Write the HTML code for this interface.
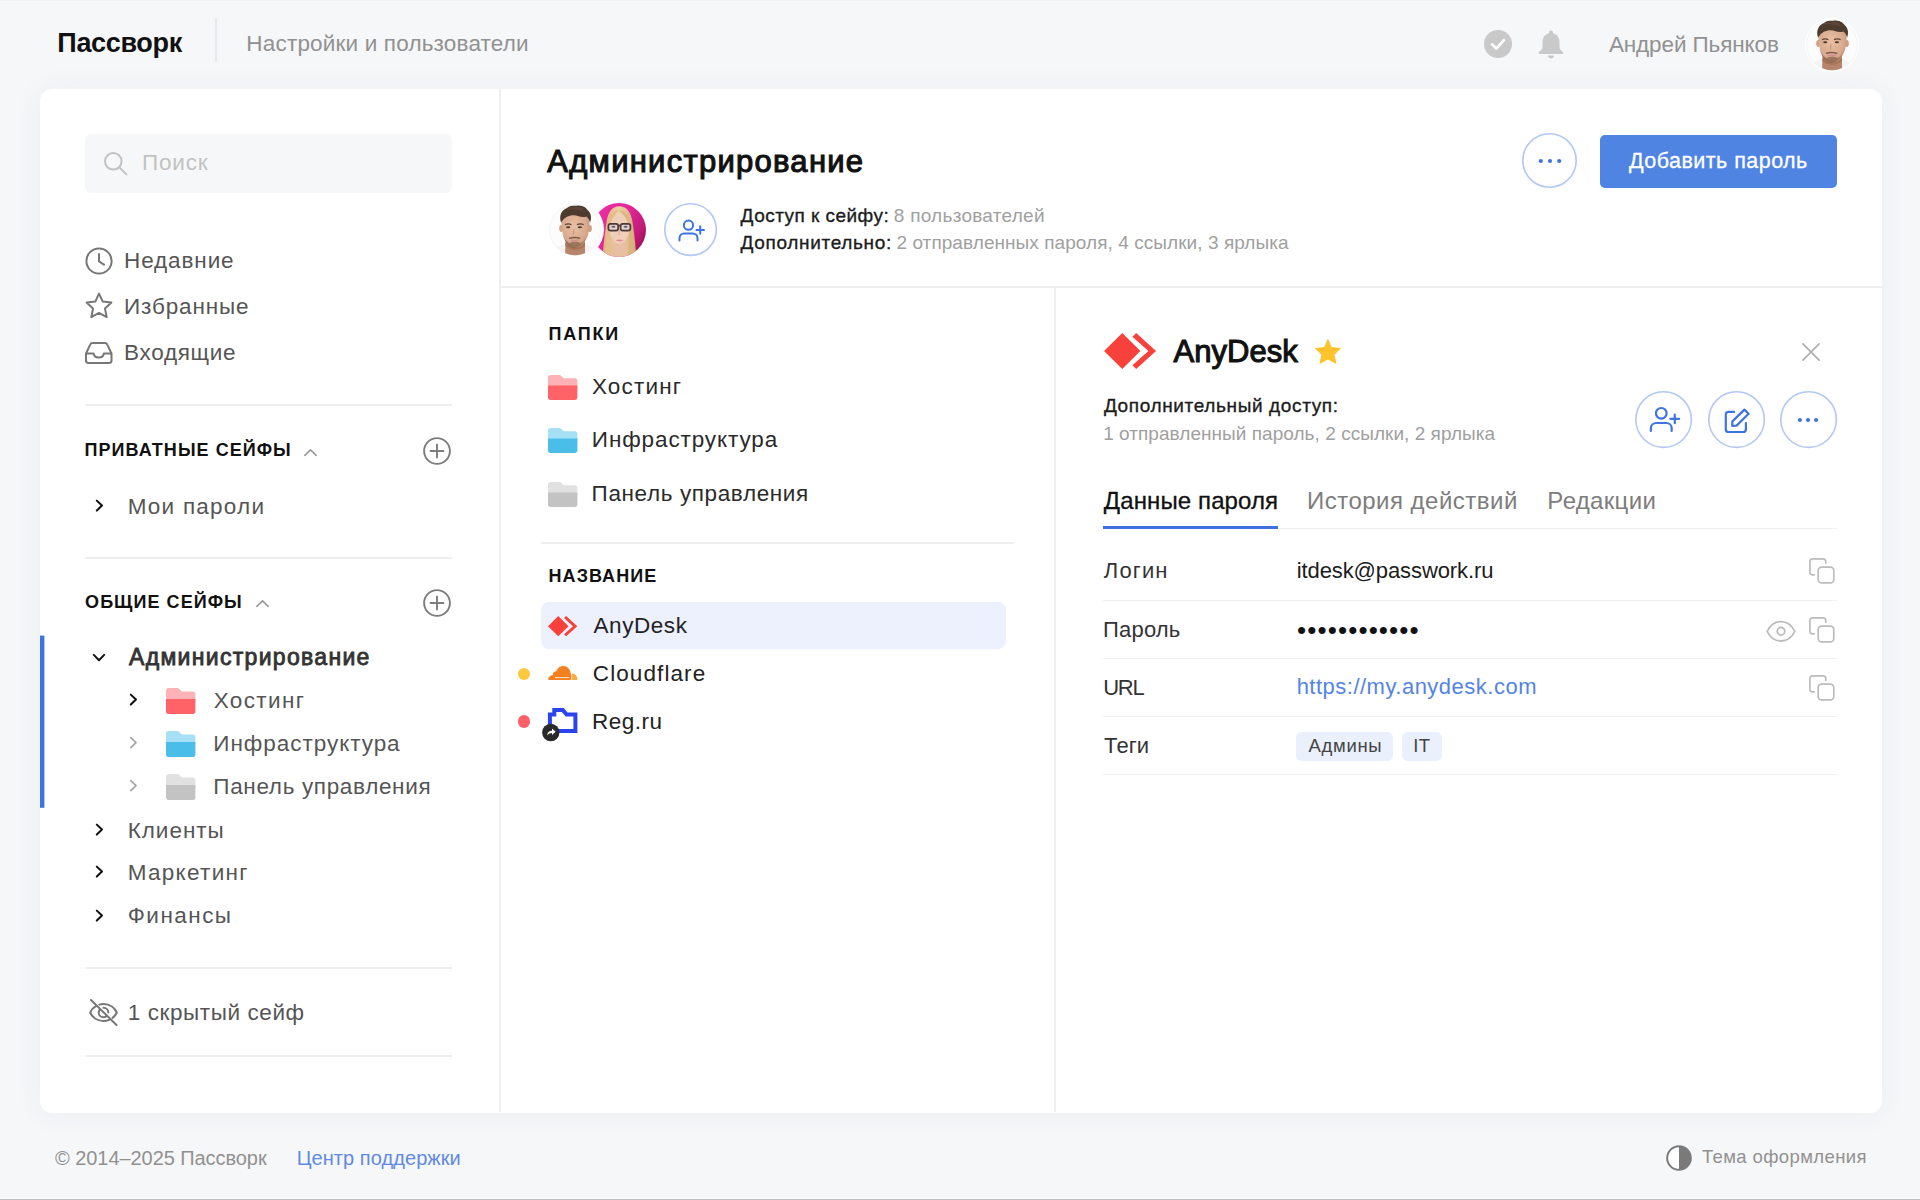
<!DOCTYPE html>
<html lang="ru">
<head>
<meta charset="utf-8">
<title>Пассворк</title>
<style>
*{box-sizing:border-box;margin:0;padding:0}
html,body{width:1920px;height:1200px;overflow:hidden}
body{background:#f6f7f9;font-family:"Liberation Sans","DejaVu Sans",sans-serif;color:#1a1a1a;position:relative}
.a{position:absolute}
.t{position:absolute;white-space:nowrap;line-height:1}
.b{font-weight:700}
svg{position:absolute;overflow:visible}
.card{position:absolute;left:40px;top:89px;width:1842px;height:1024px;background:#fff;border-radius:12px;box-shadow:0 1px 30px rgba(40,50,80,.05)}
.cb{position:absolute;border-radius:50%;border:2px solid #c5d6f8;background:#fff}
.m{-webkit-text-stroke:.35px currentColor}
.m2{-webkit-text-stroke:.3px currentColor}
.sb{-webkit-text-stroke:1.1px currentColor}
.sb2{-webkit-text-stroke:.85px currentColor}
</style>
</head>
<body>
<!-- TOP BAR -->
<div class="t b" id="logo" style="left:57.36px;top:30px;font-size:27px;letter-spacing:-0.344px;color:#111;">Пассворк</div>
<div class="a" style="left:215px;top:18px;width:2px;height:44px;background:#e8e9ec"></div>
<div class="a" style="left:0px;top:0px;width:1920px;height:1px;background:#f0f1f3"></div>
<div class="t " id="nav1" style="left:246.37px;top:33px;font-size:22.5px;letter-spacing:0.175px;color:#919191;">Настройки и пользователи</div>
<svg style="left:1483.5px;top:30px" width="28" height="28" viewBox="0 0 28 28"><circle cx="14" cy="14" r="14" fill="#c9c9c9"/><path d="M8 14.3 L12.3 18.5 L20 10.2" fill="none" stroke="#fff" stroke-width="2.6" stroke-linecap="round" stroke-linejoin="round"/></svg>
<svg style="left:1538px;top:30px" width="26" height="29" viewBox="0 0 26 29"><path d="M13 0.5 C14.2 0.5 15 1.4 15 2.5 L15 3.2 C19 4.2 21.5 7.6 21.5 12 L21.5 17 C21.5 19.2 23.2 20.6 25 22 C25.8 22.7 25.4 24 24.2 24 L1.8 24 C0.6 24 0.2 22.7 1 22 C2.8 20.6 4.5 19.2 4.5 17 L4.5 12 C4.5 7.6 7 4.2 11 3.2 L11 2.5 C11 1.4 11.8 0.5 13 0.5 Z" fill="#c9c9c9"/><path d="M9.8 25.6 L16.2 25.6 C16 27.4 14.7 28.6 13 28.6 C11.3 28.6 10 27.4 9.8 25.6 Z" fill="#c9c9c9"/></svg>
<div class="t " id="uname" style="left:1608.93px;top:34px;font-size:22.5px;letter-spacing:-0.120px;color:#919191;">Андрей Пьянков</div>
<svg style="left:1805px;top:17.700000000000003px" width="54" height="54" viewBox="-27 -27 54 54">
<defs><clipPath id="av1"><circle cx="0" cy="0" r="25.2"/></clipPath>
<filter id="av1f" x="-20%" y="-20%" width="140%" height="140%"><feGaussianBlur stdDeviation="0.55"/></filter>
<radialGradient id="av1g" cx="0.45" cy="0.4" r="0.65"><stop offset="0" stop-color="#e8c0a6"/><stop offset="0.7" stop-color="#d9a98c"/><stop offset="1" stop-color="#c08e72"/></radialGradient></defs>
<circle cx="0" cy="0" r="27" fill="#ffffff"/>
<circle cx="0" cy="0" r="25.4" fill="#fcfcfc" stroke="#f1f1f2" stroke-width="0.8"/>
<g clip-path="url(#av1)"><g filter="url(#av1f)">
<path d="M-27 30 L-24 22 Q-16 15 -9 14 L10 14 Q17 16 24 23 L27 30 Z" fill="#f3f3f4"/>
<path d="M-9.5 9 L-10 30 L10 30 L10 9 Z" fill="#b78569"/>
<path d="M-9.5 16 Q0 24 10 16 L10 13 L-9.5 13 Z" fill="#a87458"/>
<ellipse cx="-13.8" cy="-1.5" rx="2" ry="3.4" fill="#d3a184"/><ellipse cx="14.8" cy="-1.5" rx="2" ry="3.4" fill="#cf9d80"/>
<path d="M-13.5 -6 C-13.5 -16 -7 -17.5 0.5 -17.5 C8 -17.5 14.5 -16 14.5 -6 C14.5 3 11.5 11 6.5 15.5 C3.5 18.3 -2 18.3 -5 15.5 C-10 11 -13.5 3 -13.5 -6 Z" fill="url(#av1g)"/>
<path d="M-12.8 2 C-11 11 -7 16.5 -1 18.2 C5 18 10.5 12 13.6 2 C11.5 8.5 8.5 12.5 5.5 13.2 C2.5 11.4 -2.5 11.4 -5.5 13.2 C-8.5 12 -11 8 -12.8 2 Z" fill="#8a6650" opacity=".78"/>
<path d="M-13.8 -7 C-16.4 -14 -13.6 -20 -8 -22 C-5 -25.2 1 -24 3 -24.4 C8 -25.2 11.6 -21.8 13 -19.4 C16.6 -16.4 16.6 -11 15 -7 C14.6 -9.6 13.6 -11.8 11.5 -13.6 C7 -11.6 3 -14.6 -1 -14.8 C-6 -15 -10.6 -12.4 -12.4 -9.4 C-13.2 -8.8 -13.5 -8 -13.8 -7 Z" fill="#4d3a2e"/>
<path d="M-9 -21 C-6 -23.5 -2 -22 1 -23 C5 -23.5 9 -21.5 11 -18.5 C7 -20.5 3 -19.5 -1 -20.5 C-4 -21 -7 -20 -9 -21 Z" fill="#63493a" opacity=".8"/>
<path d="M-10 -5.4 Q-7 -6.8 -3.6 -5.4 M2 -5.4 Q5.4 -6.8 8.6 -5.4" stroke="#5d4434" stroke-width="1.3" fill="none"/>
<ellipse cx="-6.8" cy="-2.7" rx="2.1" ry="1" fill="#4a372c"/>
<ellipse cx="4.9" cy="-2.7" rx="2.1" ry="1" fill="#4a372c"/>
<path d="M-1 -1 L-1.6 4.6" stroke="#c79879" stroke-width="1.2" fill="none"/>
<path d="M-6 8.4 Q-0.6 6.6 5.4 8.4" stroke="#7d5d4a" stroke-width="1.5" fill="none"/>
<path d="M-4.4 9.9 Q-0.6 11.6 4 9.9" stroke="#cf8e8c" stroke-width="1.4" fill="none"/>
</g></g>
</svg>
<div class="card"></div>
<!-- SIDEBAR -->
<div class="a" style="left:85px;top:134px;width:367px;height:59px;background:#f6f7f8;border-radius:6px"></div>
<svg style="left:103px;top:151px" width="25" height="25" viewBox="0 0 25 25"><circle cx="10.3" cy="10.3" r="8.3" fill="none" stroke="#c2c2c2" stroke-width="2"/><path d="M16.4 16.4 L23.4 23.4" stroke="#c2c2c2" stroke-width="2" stroke-linecap="round"/></svg>
<div class="t " id="srch" style="left:142.03px;top:152px;font-size:22.5px;letter-spacing:0.820px;color:#c2c2c2;">Поиск</div>
<svg style="left:85px;top:246.5px" width="28" height="28" viewBox="-14 -14 28 28"><circle r="12.6" fill="none" stroke="#777" stroke-width="2"/><path d="M0 -7 L0 0.4 L5 3.6" fill="none" stroke="#777" stroke-width="2" stroke-linecap="round" stroke-linejoin="round"/></svg>
<div class="t " id="s1" style="left:124.01px;top:250px;font-size:22.5px;letter-spacing:0.891px;color:#555;">Недавние</div>
<svg style="left:85px;top:292px" width="28" height="27" viewBox="0 0 28 27"><path d="M14 1.6 L17.7 9.6 L26.4 10.6 L20 16.6 L21.7 25.2 L14 20.9 L6.3 25.2 L8 16.6 L1.6 10.6 L10.3 9.6 Z" fill="none" stroke="#777" stroke-width="2" stroke-linejoin="round"/></svg>
<div class="t " id="s2" style="left:124.01px;top:296px;font-size:22.5px;letter-spacing:0.856px;color:#555;">Избранные</div>
<svg style="left:85px;top:342px" width="27.5" height="22" viewBox="0 0 27.5 22"><path d="M1 11.5 L5.2 2.6 C5.6 1.6 6.4 1 7.5 1 L20 1 C21.1 1 21.9 1.6 22.3 2.6 L26.5 11.5 L26.5 18.6 C26.5 20 25.5 21 24.1 21 L3.4 21 C2 21 1 20 1 18.6 Z" fill="none" stroke="#777" stroke-width="2" stroke-linejoin="round"/><path d="M1 11.5 L8.6 11.5 C9 13.8 11 15.6 13.75 15.6 C16.5 15.6 18.5 13.8 18.9 11.5 L26.5 11.5" fill="none" stroke="#777" stroke-width="2" stroke-linejoin="round"/></svg>
<div class="t " id="s3" style="left:124.01px;top:342px;font-size:22.5px;letter-spacing:0.704px;color:#555;">Входящие</div>
<div class="a" style="left:85px;top:404px;width:367px;height:2px;background:#eeeeee"></div>
<div class="t b" id="ph" style="left:84.54px;top:441px;font-size:18px;letter-spacing:1.040px;color:#111;">ПРИВАТНЫЕ СЕЙФЫ</div>
<svg style="left:304.0px;top:448.5px" width="13" height="7" viewBox="0 0 13 7"><path d="M0.8 6.3 L6.5 0.9 L12.2 6.3" fill="none" stroke="#999" stroke-width="1.6" stroke-linecap="round" stroke-linejoin="round"/></svg>
<svg style="left:423px;top:436.5px" width="28" height="28" viewBox="-14 -14 28 28"><circle r="12.899999999999999" fill="none" stroke="#7d7d7d" stroke-width="1.9"/><path d="M-6.5 0 L6.5 0 M0 -6.5 L0 6.5" stroke="#7d7d7d" stroke-width="1.9" stroke-linecap="round"/></svg>
<svg style="left:96.1px;top:500.09999999999997px" width="6.8" height="11.2" viewBox="0 0 6.8 11.2"><path d="M0.8 0.6 L6 5.6 L0.8 10.6" fill="none" stroke="#111" stroke-width="2.0" stroke-linecap="round" stroke-linejoin="round"/></svg>
<div class="t " id="p1" style="left:127.63px;top:496px;font-size:22.5px;letter-spacing:1.239px;color:#555;">Мои пароли</div>
<div class="a" style="left:85px;top:557px;width:367px;height:2px;background:#eeeeee"></div>
<div class="t b" id="sh" style="left:85.08px;top:593px;font-size:18px;letter-spacing:1.051px;color:#111;">ОБЩИЕ СЕЙФЫ</div>
<svg style="left:255.5px;top:600.2px" width="13" height="7" viewBox="0 0 13 7"><path d="M0.8 6.3 L6.5 0.9 L12.2 6.3" fill="none" stroke="#999" stroke-width="1.6" stroke-linecap="round" stroke-linejoin="round"/></svg>
<svg style="left:423px;top:589px" width="28" height="28" viewBox="-14 -14 28 28"><circle r="12.899999999999999" fill="none" stroke="#7d7d7d" stroke-width="1.9"/><path d="M-6.5 0 L6.5 0 M0 -6.5 L0 6.5" stroke="#7d7d7d" stroke-width="1.9" stroke-linecap="round"/></svg>
<svg style="left:40px;top:635px" width="6" height="174" viewBox="0 0 6 174"><rect x="0" y="0.6" width="4.4" height="172.2" fill="#3d74df"/></svg>
<svg style="left:92.8px;top:653.9px" width="12" height="7.2" viewBox="0 0 12 7.2"><path d="M0.8 0.9 L6 6.2 L11.2 0.9" fill="none" stroke="#111" stroke-width="2.0" stroke-linecap="round" stroke-linejoin="round"/></svg>
<div class="t sb2" id="adm" style="left:129.06px;top:646px;font-size:23px;letter-spacing:1.315px;color:#333;">Администрирование</div>
<svg style="left:129.79999999999998px;top:693.9px" width="6.8" height="11.2" viewBox="0 0 6.8 11.2"><path d="M0.8 0.6 L6 5.6 L0.8 10.6" fill="none" stroke="#111" stroke-width="2.0" stroke-linecap="round" stroke-linejoin="round"/></svg>
<svg style="left:166.1px;top:687.8px" width="29.4" height="26" viewBox="0 0 29.4 26" preserveAspectRatio="none"><path d="M2.6 0 L11 0 C12.2 0 12.8 0.4 13.6 1.3 L15 2.8 C15.5 3.3 15.9 3.4 16.6 3.4 L26.8 3.4 C28.3 3.4 29.4 4.5 29.4 6 L29.4 14 L0 14 L0 2.6 C0 1.1 1.1 0 2.6 0 Z" fill="#ffb2b5"/><path d="M0 11 L29.4 11 L29.4 23.4 C29.4 24.9 28.3 26 26.8 26 L2.6 26 C1.1 26 0 24.9 0 23.4 Z" fill="#ff6368"/></svg>
<div class="t " id="f1" style="left:213.66px;top:690px;font-size:22.5px;letter-spacing:1.393px;color:#555;">Хостинг</div>
<svg style="left:129.79999999999998px;top:737.4px" width="6.8" height="11.2" viewBox="0 0 6.8 11.2"><path d="M0.8 0.6 L6 5.6 L0.8 10.6" fill="none" stroke="#a5a5a5" stroke-width="1.7" stroke-linecap="round" stroke-linejoin="round"/></svg>
<svg style="left:166.1px;top:730.6px" width="29.4" height="26" viewBox="0 0 29.4 26" preserveAspectRatio="none"><path d="M2.6 0 L11 0 C12.2 0 12.8 0.4 13.6 1.3 L15 2.8 C15.5 3.3 15.9 3.4 16.6 3.4 L26.8 3.4 C28.3 3.4 29.4 4.5 29.4 6 L29.4 14 L0 14 L0 2.6 C0 1.1 1.1 0 2.6 0 Z" fill="#a6e0f4"/><path d="M0 11 L29.4 11 L29.4 23.4 C29.4 24.9 28.3 26 26.8 26 L2.6 26 C1.1 26 0 24.9 0 23.4 Z" fill="#4abde9"/></svg>
<div class="t " id="f2" style="left:213.32px;top:733px;font-size:22.5px;letter-spacing:0.957px;color:#555;">Инфраструктура</div>
<svg style="left:129.79999999999998px;top:780.1999999999999px" width="6.8" height="11.2" viewBox="0 0 6.8 11.2"><path d="M0.8 0.6 L6 5.6 L0.8 10.6" fill="none" stroke="#a5a5a5" stroke-width="1.7" stroke-linecap="round" stroke-linejoin="round"/></svg>
<svg style="left:166.1px;top:774px" width="29.4" height="26" viewBox="0 0 29.4 26" preserveAspectRatio="none"><path d="M2.6 0 L11 0 C12.2 0 12.8 0.4 13.6 1.3 L15 2.8 C15.5 3.3 15.9 3.4 16.6 3.4 L26.8 3.4 C28.3 3.4 29.4 4.5 29.4 6 L29.4 14 L0 14 L0 2.6 C0 1.1 1.1 0 2.6 0 Z" fill="#e1e1e1"/><path d="M0 11 L29.4 11 L29.4 23.4 C29.4 24.9 28.3 26 26.8 26 L2.6 26 C1.1 26 0 24.9 0 23.4 Z" fill="#c3c3c3"/></svg>
<div class="t " id="f3" style="left:213.37px;top:776px;font-size:22.5px;letter-spacing:0.658px;color:#555;">Панель управления</div>
<svg style="left:96.1px;top:823.6px" width="6.8" height="11.2" viewBox="0 0 6.8 11.2"><path d="M0.8 0.6 L6 5.6 L0.8 10.6" fill="none" stroke="#111" stroke-width="2.0" stroke-linecap="round" stroke-linejoin="round"/></svg>
<div class="t " id="v2" style="left:127.63px;top:820px;font-size:22.5px;letter-spacing:0.986px;color:#555;">Клиенты</div>
<svg style="left:96.1px;top:866.1999999999999px" width="6.8" height="11.2" viewBox="0 0 6.8 11.2"><path d="M0.8 0.6 L6 5.6 L0.8 10.6" fill="none" stroke="#111" stroke-width="2.0" stroke-linecap="round" stroke-linejoin="round"/></svg>
<div class="t " id="v3" style="left:127.63px;top:862px;font-size:22.5px;letter-spacing:1.308px;color:#555;">Маркетинг</div>
<svg style="left:96.1px;top:909.9px" width="6.8" height="11.2" viewBox="0 0 6.8 11.2"><path d="M0.8 0.6 L6 5.6 L0.8 10.6" fill="none" stroke="#111" stroke-width="2.0" stroke-linecap="round" stroke-linejoin="round"/></svg>
<div class="t " id="v4" style="left:127.8px;top:905px;font-size:22.5px;letter-spacing:1.461px;color:#555;">Финансы</div>
<div class="a" style="left:85px;top:967px;width:367px;height:2px;background:#eeeeee"></div>
<svg style="left:88.5px;top:998.5px" width="29" height="27" viewBox="0 0 29 27"><path d="M6.8 7.2 C3.8 9 2 11.7 1.2 13.5 C3.2 18 8 22 14.5 22 C16.6 22 18.5 21.6 20.2 20.9 M10.5 5.6 C11.7 5.2 13 5 14.5 5 C21 5 25.8 9 27.8 13.5 C27 15.3 25.6 17.3 23.6 18.9" fill="none" stroke="#777" stroke-width="2" stroke-linecap="round"/><path d="M10.8 10.8 C10 11.6 9.7 12.5 9.7 13.5 C9.7 16.2 11.8 18.3 14.5 18.3 C15.5 18.3 16.4 18 17.2 17.4 M14.5 8.7 C17.2 8.7 19.3 10.8 19.3 13.5" fill="none" stroke="#777" stroke-width="2" stroke-linecap="round"/><path d="M2 1 L27.5 26" stroke="#777" stroke-width="2" stroke-linecap="round"/></svg>
<div class="t " id="hid" style="left:127.86px;top:1002px;font-size:22.5px;letter-spacing:0.577px;color:#555;">1 скрытый сейф</div>
<div class="a" style="left:85px;top:1055px;width:367px;height:2px;background:#eeeeee"></div>
<div class="a" style="left:499px;top:89px;width:2px;height:1023px;background:#efefef"></div>
<!-- MAIN HEADER -->
<div class="t sb" id="h1" style="left:547.29px;top:146px;font-size:31px;letter-spacing:1.262px;color:#111;">Администрирование</div>
<svg style="left:591.8px;top:202.7px" width="54" height="54" viewBox="-27 -27 54 54">
<defs><clipPath id="av3"><circle cx="0" cy="0" r="27"/></clipPath>
<filter id="av3f" x="-20%" y="-20%" width="140%" height="140%"><feGaussianBlur stdDeviation="0.55"/></filter>
<linearGradient id="av3b" x1="0" y1="0" x2="1" y2="0.6"><stop offset="0" stop-color="#ee2fa4"/><stop offset="0.55" stop-color="#e3269a"/><stop offset="0.85" stop-color="#c41c7d"/><stop offset="1" stop-color="#a5165f"/></linearGradient>
<linearGradient id="av3h" x1="0" y1="0" x2="1" y2="0"><stop offset="0" stop-color="#dcb17c"/><stop offset="0.5" stop-color="#ecd2a4"/><stop offset="1" stop-color="#d6a772"/></linearGradient></defs>
<circle cx="0" cy="0" r="27" fill="url(#av3b)"/>
<g clip-path="url(#av3)"><g filter="url(#av3f)">
<path d="M-16.5 30 C-15.5 14 -14 2 -12.5 -8 C-11 -19 -6 -23.8 0 -23.8 C7 -23.8 12 -19 13.5 -8 C15 2 16.5 14 17.5 30 Z" fill="url(#av3h)"/>
<path d="M-6.5 9 L-7.5 30 L8.5 30 L7.5 9 Z" fill="#e8bfa1"/>
<path d="M-10 -4 C-10 -13 -6 -17.4 0.4 -17.4 C7 -17.4 10.8 -13 10.8 -4 C10.8 3 8 9.5 4.4 12.4 C2 14.2 -1.4 14.2 -3.8 12.4 C-7.4 9.5 -10 3 -10 -4 Z" fill="#f0cfb8"/>
<path d="M-10.4 -5 C-10.6 -14 -6 -19.6 -0.4 -20 C-4 -15 -8 -11 -9.2 -2 Z" fill="#e2bd8a"/>
<path d="M11.2 -5 C11.4 -14 7 -19.6 -0.4 -20 C4 -15.4 9 -11 10 -2 Z" fill="#dfb683"/>
<path d="M-10.6 -3 C-12.6 8 -13.6 20 -14 30 L-8.6 30 C-9 20 -9.6 8 -9.4 0 Z" fill="#e4c08e"/>
<path d="M11.4 -3 C13.4 8 14.4 20 15 30 L9.4 30 C10 20 10.4 8 10.2 0 Z" fill="#ddb27e"/>
<rect x="-10.6" y="-6.2" width="9.8" height="6.8" rx="2.2" fill="#e6cfc6" stroke="#4a3838" stroke-width="1.7"/>
<rect x="1.6" y="-6.2" width="9.8" height="6.8" rx="2.2" fill="#e6cfc6" stroke="#4a3838" stroke-width="1.7"/>
<path d="M-0.8 -4.4 L1.6 -4.4" stroke="#4a3838" stroke-width="1.5"/>
<ellipse cx="-5.6" cy="-3.2" rx="2" ry="1" fill="#55657f"/><ellipse cx="6.6" cy="-3.2" rx="2" ry="1" fill="#55657f"/>
<path d="M0.4 0 L0 5" stroke="#dcae92" stroke-width="1.2"/>
<path d="M-3.5 10.3 Q0.6 8.8 4.8 10.3 Q0.6 12.6 -3.5 10.3 Z" fill="#d98a94"/>
</g></g></svg>
<div class="a" style="left:546.2px;top:200.9px;width:57.6px;height:57.6px;border-radius:50%;background:#fff"></div>
<svg style="left:548px;top:202.7px" width="54" height="54" viewBox="-27 -27 54 54">
<defs><clipPath id="av2"><circle cx="0" cy="0" r="25.2"/></clipPath>
<filter id="av2f" x="-20%" y="-20%" width="140%" height="140%"><feGaussianBlur stdDeviation="0.55"/></filter>
<radialGradient id="av2g" cx="0.45" cy="0.4" r="0.65"><stop offset="0" stop-color="#e8c0a6"/><stop offset="0.7" stop-color="#d9a98c"/><stop offset="1" stop-color="#c08e72"/></radialGradient></defs>
<circle cx="0" cy="0" r="27" fill="#ffffff"/>
<circle cx="0" cy="0" r="25.4" fill="#fcfcfc" stroke="#f1f1f2" stroke-width="0.8"/>
<g clip-path="url(#av2)"><g filter="url(#av2f)">
<path d="M-27 30 L-24 22 Q-16 15 -9 14 L10 14 Q17 16 24 23 L27 30 Z" fill="#f3f3f4"/>
<path d="M-9.5 9 L-10 30 L10 30 L10 9 Z" fill="#b78569"/>
<path d="M-9.5 16 Q0 24 10 16 L10 13 L-9.5 13 Z" fill="#a87458"/>
<ellipse cx="-13.8" cy="-1.5" rx="2" ry="3.4" fill="#d3a184"/><ellipse cx="14.8" cy="-1.5" rx="2" ry="3.4" fill="#cf9d80"/>
<path d="M-13.5 -6 C-13.5 -16 -7 -17.5 0.5 -17.5 C8 -17.5 14.5 -16 14.5 -6 C14.5 3 11.5 11 6.5 15.5 C3.5 18.3 -2 18.3 -5 15.5 C-10 11 -13.5 3 -13.5 -6 Z" fill="url(#av2g)"/>
<path d="M-12.8 2 C-11 11 -7 16.5 -1 18.2 C5 18 10.5 12 13.6 2 C11.5 8.5 8.5 12.5 5.5 13.2 C2.5 11.4 -2.5 11.4 -5.5 13.2 C-8.5 12 -11 8 -12.8 2 Z" fill="#8a6650" opacity=".78"/>
<path d="M-13.8 -7 C-16.4 -14 -13.6 -20 -8 -22 C-5 -25.2 1 -24 3 -24.4 C8 -25.2 11.6 -21.8 13 -19.4 C16.6 -16.4 16.6 -11 15 -7 C14.6 -9.6 13.6 -11.8 11.5 -13.6 C7 -11.6 3 -14.6 -1 -14.8 C-6 -15 -10.6 -12.4 -12.4 -9.4 C-13.2 -8.8 -13.5 -8 -13.8 -7 Z" fill="#4d3a2e"/>
<path d="M-9 -21 C-6 -23.5 -2 -22 1 -23 C5 -23.5 9 -21.5 11 -18.5 C7 -20.5 3 -19.5 -1 -20.5 C-4 -21 -7 -20 -9 -21 Z" fill="#63493a" opacity=".8"/>
<path d="M-10 -5.4 Q-7 -6.8 -3.6 -5.4 M2 -5.4 Q5.4 -6.8 8.6 -5.4" stroke="#5d4434" stroke-width="1.3" fill="none"/>
<ellipse cx="-6.8" cy="-2.7" rx="2.1" ry="1" fill="#4a372c"/>
<ellipse cx="4.9" cy="-2.7" rx="2.1" ry="1" fill="#4a372c"/>
<path d="M-1 -1 L-1.6 4.6" stroke="#c79879" stroke-width="1.2" fill="none"/>
<path d="M-6 8.4 Q-0.6 6.6 5.4 8.4" stroke="#7d5d4a" stroke-width="1.5" fill="none"/>
<path d="M-4.4 9.9 Q-0.6 11.6 4 9.9" stroke="#cf8e8c" stroke-width="1.4" fill="none"/>
</g></g>
</svg>
<svg style="left:661.9px;top:200.8px" width="57.2" height="57.2" viewBox="-28.6 -28.6 57.2 57.2"><circle r="25.8" fill="#fff" stroke="#b4c8f4" stroke-width="1.6"/></svg>
<svg style="left:676.5px;top:217.5px" width="28.0" height="24.0" viewBox="-14 -12 28 24"><circle cx="-2.5" cy="-4.8" r="4.6" fill="none" stroke="#3d74e0" stroke-width="2"/><path d="M-11.5 10.5 L-11.5 8.2 C-11.5 5.4 -9.4 3.6 -6.8 3.6 L1.8 3.6 C4.4 3.6 6.5 5.4 6.5 8.2 L6.5 10.5" fill="none" stroke="#3d74e0" stroke-width="2" stroke-linecap="round"/><path d="M5.4 0 L13 0 M9.2 -3.8 L9.2 3.8" stroke="#3d74e0" stroke-width="2" stroke-linecap="round"/></svg>
<div class="t m" id="m1" style="left:740.6px;top:206px;font-size:19px;letter-spacing:0.463px;color:#1c1c1c;">Доступ к сейфу:</div>
<div class="t " id="m1g" style="left:893.8px;top:206px;font-size:19px;letter-spacing:0.260px;color:#a0a0a0;">8 пользователей</div>
<div class="t m" id="m2" style="left:740.6px;top:233px;font-size:19px;letter-spacing:0.660px;color:#1c1c1c;">Дополнительно:</div>
<div class="t " id="m2g" style="left:896.45px;top:233px;font-size:19px;letter-spacing:0.064px;color:#a0a0a0;">2 отправленных пароля, 4 ссылки, 3 ярлыка</div>
<svg style="left:1520.0px;top:130.9px" width="59.0" height="59.0" viewBox="-29.5 -29.5 59.0 59.0"><circle r="26.7" fill="#fff" stroke="#b4c8f4" stroke-width="1.6"/></svg>
<svg style="left:1539.7px;top:158px" width="20" height="6" viewBox="-10 -3 20 6"><circle cx="-9.2" r="2.1" fill="#3d74e0"/><circle cx="0" r="2.1" fill="#3d74e0"/><circle cx="9.2" r="2.1" fill="#3d74e0"/></svg>
<div class="a" style="left:1599.5px;top:134.5px;width:237.5px;height:53.5px;border-radius:5px;background:#4f84e2"></div>
<div class="t m2" id="addp" style="left:1629.07px;top:151px;font-size:21.5px;letter-spacing:0.462px;color:#fff;">Добавить пароль</div>
<div class="a" style="left:500px;top:286px;width:1382px;height:2px;background:#eeeeee"></div>
<!-- MIDDLE -->
<div class="t b" id="fh" style="left:548.4px;top:325px;font-size:18px;letter-spacing:1.811px;color:#111;">ПАПКИ</div>
<svg style="left:547.5px;top:374.5px" width="29.4" height="25" viewBox="0 0 29.4 26" preserveAspectRatio="none"><path d="M2.6 0 L11 0 C12.2 0 12.8 0.4 13.6 1.3 L15 2.8 C15.5 3.3 15.9 3.4 16.6 3.4 L26.8 3.4 C28.3 3.4 29.4 4.5 29.4 6 L29.4 14 L0 14 L0 2.6 C0 1.1 1.1 0 2.6 0 Z" fill="#ffb2b5"/><path d="M0 11 L29.4 11 L29.4 23.4 C29.4 24.9 28.3 26 26.8 26 L2.6 26 C1.1 26 0 24.9 0 23.4 Z" fill="#ff6368"/></svg>
<div class="t " id="mf1" style="left:591.88px;top:376px;font-size:22.5px;letter-spacing:1.186px;color:#2a2a2a;">Хостинг</div>
<svg style="left:547.5px;top:428.2px" width="29.4" height="25" viewBox="0 0 29.4 26" preserveAspectRatio="none"><path d="M2.6 0 L11 0 C12.2 0 12.8 0.4 13.6 1.3 L15 2.8 C15.5 3.3 15.9 3.4 16.6 3.4 L26.8 3.4 C28.3 3.4 29.4 4.5 29.4 6 L29.4 14 L0 14 L0 2.6 C0 1.1 1.1 0 2.6 0 Z" fill="#a6e0f4"/><path d="M0 11 L29.4 11 L29.4 23.4 C29.4 24.9 28.3 26 26.8 26 L2.6 26 C1.1 26 0 24.9 0 23.4 Z" fill="#4abde9"/></svg>
<div class="t " id="mf2" style="left:591.83px;top:429px;font-size:22.5px;letter-spacing:0.883px;color:#2a2a2a;">Инфраструктура</div>
<svg style="left:547.5px;top:481.6px" width="29.4" height="25" viewBox="0 0 29.4 26" preserveAspectRatio="none"><path d="M2.6 0 L11 0 C12.2 0 12.8 0.4 13.6 1.3 L15 2.8 C15.5 3.3 15.9 3.4 16.6 3.4 L26.8 3.4 C28.3 3.4 29.4 4.5 29.4 6 L29.4 14 L0 14 L0 2.6 C0 1.1 1.1 0 2.6 0 Z" fill="#e1e1e1"/><path d="M0 11 L29.4 11 L29.4 23.4 C29.4 24.9 28.3 26 26.8 26 L2.6 26 C1.1 26 0 24.9 0 23.4 Z" fill="#c3c3c3"/></svg>
<div class="t " id="mf3" style="left:591.6px;top:483px;font-size:22.5px;letter-spacing:0.620px;color:#2a2a2a;">Панель управления</div>
<div class="a" style="left:541px;top:542px;width:473px;height:2px;background:#eeeeee"></div>
<div class="t b" id="nh" style="left:548.54px;top:567px;font-size:18px;letter-spacing:1.051px;color:#111;">НАЗВАНИЕ</div>
<div class="a" style="left:541px;top:602px;width:465px;height:47px;border-radius:8px;background:#edf1fd"></div>
<svg style="left:548.4px;top:615.7px" width="29.3" height="20.3" viewBox="0 0 29.3 20.3"><path d="M10.25 0 L20.5 10.15 L10.25 20.3 L0 10.15 Z" fill="#f8413a"/><path d="M18.1 0 L29.3 10.15 L18.1 20.3 L16 18.2 L25 10.15 L16 2.1 Z" fill="#f8413a"/></svg>
<div class="t " id="n1" style="left:593.49px;top:615px;font-size:22.5px;letter-spacing:0.563px;color:#222;">AnyDesk</div>
<div class="a" style="left:518px;top:667.8px;width:12.4px;height:12.4px;border-radius:50%;background:#fdc83f"></div>
<svg style="left:548.2px;top:666px" width="29.6" height="14" viewBox="0 0 29.6 14"><path d="M22.6 14 L1.2 14 C0.4 14 0 13.5 0.2 12.8 C0.8 10.6 2.6 9.3 4.7 9.2 C4.6 6.8 6.3 5.2 8.4 5.3 C9.3 2.2 12 0 15.2 0 C19 0 22 2.8 22.5 6.6 L23.4 9.6 C23.8 11.4 23.4 12.8 22.6 14 Z" fill="#f48120"/><path d="M24 7.6 C26.8 7.6 29 9.6 29.5 12.6 C29.6 13.4 29.3 14 28.5 14 L23.4 14 C24.2 12.6 24.4 11 24 9.4 Z" fill="#faad3f"/><path d="M7 11.6 L21.6 11.6" stroke="#fff" stroke-width="0.9" opacity=".85"/></svg>
<div class="t " id="n2" style="left:592.83px;top:663px;font-size:22.5px;letter-spacing:1.086px;color:#222;">Cloudflare</div>
<div class="a" style="left:518px;top:715.2px;width:12.4px;height:12.4px;border-radius:50%;background:#ff5f69"></div>
<svg style="left:546.4px;top:706.2px" width="34" height="38" viewBox="0 0 34 38"><path d="M3.9 22 L3.9 8.6 L8.3 8.6 L8.3 3.9 L16.8 3.9 L20.6 8.6 L29.4 8.6 L29.4 24.9 L12 24.9" fill="none" stroke="#2a44f0" stroke-width="4" stroke-linejoin="miter"/><circle cx="4.8" cy="26.5" r="8.7" fill="#2a2a2a"/><path d="M1.2 29.4 C1.4 26.4 3.2 24.8 6 24.8 L6 22.6 L9.6 25.8 L6 29 L6 26.9 C4.2 26.9 2.6 27.6 1.2 29.4 Z" fill="#fff"/></svg>
<div class="t " id="n3" style="left:592.09px;top:711px;font-size:22.5px;letter-spacing:0.457px;color:#222;">Reg.ru</div>
<div class="a" style="left:1054px;top:286px;width:2px;height:826px;background:#efefef"></div>
<!-- RIGHT -->
<svg style="left:1104.2px;top:333.4px" width="52.1" height="36" viewBox="0 0 29.3 20.3"><path d="M10.25 0 L20.5 10.15 L10.25 20.3 L0 10.15 Z" fill="#f8413a"/><path d="M18.1 0 L29.3 10.15 L18.1 20.3 L16 18.2 L25 10.15 L16 2.1 Z" fill="#f8413a"/></svg>
<div class="t sb" id="r1" style="left:1173.52px;top:336px;font-size:31px;letter-spacing:0.023px;color:#111;">AnyDesk</div>
<svg style="left:1314.8px;top:339px" width="25.9" height="24.9" viewBox="0 0 25.9 24.9"><path d="M12.9 0.6 L16.2 8.6 L25.2 9.5 L18.9 15.8 L20.9 24.3 L12.9 19.9 L5 24.3 L7 15.8 L0.7 9.5 L9.7 8.6 Z" fill="#ffc32b" stroke="#ffc020" stroke-width="1" stroke-linejoin="round"/></svg>
<svg style="left:1801.5px;top:342.5px" width="18" height="18" viewBox="0 0 18 18"><path d="M0.9 0.9 L17.1 17.1 M17.1 0.9 L0.9 17.1" stroke="#adadad" stroke-width="1.6" stroke-linecap="round"/></svg>
<div class="t m" id="r2" style="left:1103.88px;top:396px;font-size:19px;letter-spacing:0.634px;color:#1c1c1c;">Дополнительный доступ:</div>
<div class="t " id="r3" style="left:1103.17px;top:424px;font-size:19px;letter-spacing:0.042px;color:#a0a0a0;">1 отправленный пароль, 2 ссылки, 2 ярлыка</div>
<svg style="left:1633.3000000000002px;top:389.0px" width="61.2" height="61.2" viewBox="-30.6 -30.6 61.2 61.2"><circle r="27.8" fill="#fff" stroke="#b4c8f4" stroke-width="1.6"/></svg>
<svg style="left:1648.03px;top:404.64px" width="32.34" height="27.72" viewBox="-14 -12 28 24"><circle cx="-2.5" cy="-4.8" r="4.6" fill="none" stroke="#3d74e0" stroke-width="1.9"/><path d="M-11.5 10.5 L-11.5 8.2 C-11.5 5.4 -9.4 3.6 -6.8 3.6 L1.8 3.6 C4.4 3.6 6.5 5.4 6.5 8.2 L6.5 10.5" fill="none" stroke="#3d74e0" stroke-width="1.9" stroke-linecap="round"/><path d="M5.4 0 L13 0 M9.2 -3.8 L9.2 3.8" stroke="#3d74e0" stroke-width="1.9" stroke-linecap="round"/></svg>
<svg style="left:1705.6000000000001px;top:389.0px" width="61.2" height="61.2" viewBox="-30.6 -30.6 61.2 61.2"><circle r="27.8" fill="#fff" stroke="#b4c8f4" stroke-width="1.6"/></svg>
<svg style="left:1723.5px;top:408px" width="27" height="26" viewBox="0 0 27 26"><path d="M10 3.9 L4.6 3.9 C2.8 3.9 1.8 4.9 1.8 6.7 L1.8 21.2 C1.8 23 2.8 24 4.6 24 L19.1 24 C20.9 24 21.9 23 21.9 21.2 L21.9 15" fill="none" stroke="#3d74e0" stroke-width="2.2" stroke-linecap="round"/><path d="M20.4 1.6 L24.6 5.8 L12.6 17.6 L8.2 17.8 L8.4 13.4 Z" fill="none" stroke="#3d74e0" stroke-width="2.2" stroke-linejoin="round"/></svg>
<svg style="left:1777.9px;top:389.0px" width="61.2" height="61.2" viewBox="-30.6 -30.6 61.2 61.2"><circle r="27.8" fill="#fff" stroke="#b4c8f4" stroke-width="1.6"/></svg>
<svg style="left:1797.8px;top:417.4px" width="20" height="6" viewBox="-10 -3 20 6"><circle cx="-8.1" r="2.1" fill="#3d74e0"/><circle cx="0" r="2.1" fill="#3d74e0"/><circle cx="8.1" r="2.1" fill="#3d74e0"/></svg>
<div class="t m2" id="tb1" style="left:1103.87px;top:489px;font-size:24px;letter-spacing:0.114px;color:#111;">Данные пароля</div>
<div class="t " id="tb2" style="left:1306.98px;top:489px;font-size:24px;letter-spacing:0.487px;color:#7d7d7d;">История действий</div>
<div class="t " id="tb3" style="left:1547.36px;top:489px;font-size:24px;letter-spacing:0.324px;color:#7d7d7d;">Редакции</div>
<div class="a" style="left:1103px;top:528px;width:734px;height:1px;background:#f0f0f0"></div>
<div class="a" style="left:1103px;top:526px;width:175px;height:3px;background:#3f6fe0"></div>
<div class="t " id="l1" style="left:1103.82px;top:560px;font-size:22px;letter-spacing:1.141px;color:#333;">Логин</div>
<div class="t " id="x1" style="left:1296.72px;top:560px;font-size:22px;letter-spacing:-0.101px;color:#1c1c1c;">itdesk@passwork.ru</div>
<svg style="left:1809px;top:558px" width="26" height="26" viewBox="0 0 26 26"><rect x="9.2" y="9.2" width="15.6" height="15.6" rx="3.4" fill="none" stroke="#bcbcbc" stroke-width="1.7"/><path d="M5.2 16.8 L3.8 16.8 C2 16.8 0.9 15.7 0.9 13.9 L0.9 3.8 C0.9 2 2 0.9 3.8 0.9 L13.9 0.9 C15.7 0.9 16.8 2 16.8 3.8 L16.8 5.2" fill="none" stroke="#bcbcbc" stroke-width="1.7" stroke-linecap="round"/></svg>
<div class="a" style="left:1103px;top:600px;width:734px;height:1px;background:#f0f0f0"></div>
<div class="t " id="l2" style="left:1103.06px;top:619px;font-size:22px;letter-spacing:0.182px;color:#333;">Пароль</div>
<div class="t" id="pwd" style="left:1297px;top:617px;font-size:26px;letter-spacing:1.13px;color:#111">••••••••••••</div>
<svg style="left:1766px;top:620px" width="30" height="22.6" viewBox="0 0 30 22.6"><path d="M1.2 11.3 C4.2 5.2 9.2 1.6 15 1.6 C20.8 1.6 25.8 5.2 28.8 11.3 C25.8 17.4 20.8 21 15 21 C9.2 21 4.2 17.4 1.2 11.3 Z" fill="none" stroke="#bcbcbc" stroke-width="1.8" stroke-linejoin="round"/><circle cx="15" cy="11.3" r="3.8" fill="none" stroke="#bcbcbc" stroke-width="1.8"/></svg>
<svg style="left:1809px;top:616.7px" width="26" height="26" viewBox="0 0 26 26"><rect x="9.2" y="9.2" width="15.6" height="15.6" rx="3.4" fill="none" stroke="#bcbcbc" stroke-width="1.7"/><path d="M5.2 16.8 L3.8 16.8 C2 16.8 0.9 15.7 0.9 13.9 L0.9 3.8 C0.9 2 2 0.9 3.8 0.9 L13.9 0.9 C15.7 0.9 16.8 2 16.8 3.8 L16.8 5.2" fill="none" stroke="#bcbcbc" stroke-width="1.7" stroke-linecap="round"/></svg>
<div class="a" style="left:1103px;top:658px;width:734px;height:1px;background:#f0f0f0"></div>
<div class="t " id="l3" style="left:1103.14px;top:677px;font-size:22px;letter-spacing:-1.256px;color:#333;">URL</div>
<div class="t " id="x3" style="left:1296.64px;top:676px;font-size:22px;letter-spacing:0.494px;color:#5484e3;">https://my.anydesk.com</div>
<svg style="left:1809px;top:675.2px" width="26" height="26" viewBox="0 0 26 26"><rect x="9.2" y="9.2" width="15.6" height="15.6" rx="3.4" fill="none" stroke="#bcbcbc" stroke-width="1.7"/><path d="M5.2 16.8 L3.8 16.8 C2 16.8 0.9 15.7 0.9 13.9 L0.9 3.8 C0.9 2 2 0.9 3.8 0.9 L13.9 0.9 C15.7 0.9 16.8 2 16.8 3.8 L16.8 5.2" fill="none" stroke="#bcbcbc" stroke-width="1.7" stroke-linecap="round"/></svg>
<div class="a" style="left:1103px;top:716px;width:734px;height:1px;background:#f0f0f0"></div>
<div class="t " id="l4" style="left:1104.09px;top:735px;font-size:22px;letter-spacing:0.104px;color:#333;">Теги</div>
<div class="a" style="left:1296.4px;top:731.7px;width:96.4px;height:29.5px;border-radius:5.6px;background:#eaf0fc"></div>
<div class="t " id="tg1" style="left:1308.51px;top:737px;font-size:18.5px;letter-spacing:0.686px;color:#444;">Админы</div>
<div class="a" style="left:1401.5px;top:731.7px;width:40.5px;height:29.5px;border-radius:5.6px;background:#eaf0fc"></div>
<div class="t " id="tg2" style="left:1413.3px;top:737px;font-size:18.5px;letter-spacing:0.396px;color:#444;">IT</div>
<div class="a" style="left:1103px;top:774px;width:734px;height:1px;background:#f0f0f0"></div>
<!-- FOOTER -->
<div class="t " id="ft1" style="left:55.12px;top:1148px;font-size:20px;letter-spacing:-0.070px;color:#919191;">© 2014–2025 Пассворк</div>
<div class="t " id="ft2" style="left:296.65px;top:1148px;font-size:20px;letter-spacing:0.067px;color:#6289e2;">Центр поддержки</div>
<svg style="left:1666.3px;top:1144.6px" width="26" height="26" viewBox="-13 -13 26 26"><circle r="11.8" fill="#fff" stroke="#7a7a7a" stroke-width="2"/><path d="M0 -11.8 A11.8 11.8 0 0 1 0 11.8 Z" fill="#7a7a7a"/></svg>
<div class="t " id="ft3" style="left:1701.92px;top:1148px;font-size:18.5px;letter-spacing:0.393px;color:#919191;">Тема оформления</div>
<div class="a" style="left:0px;top:1198px;width:1920px;height:1px;background:#ffffff"></div>
<div class="a" style="left:0px;top:1199px;width:1920px;height:1px;background:#bdbdbf"></div>
</body>
</html>
